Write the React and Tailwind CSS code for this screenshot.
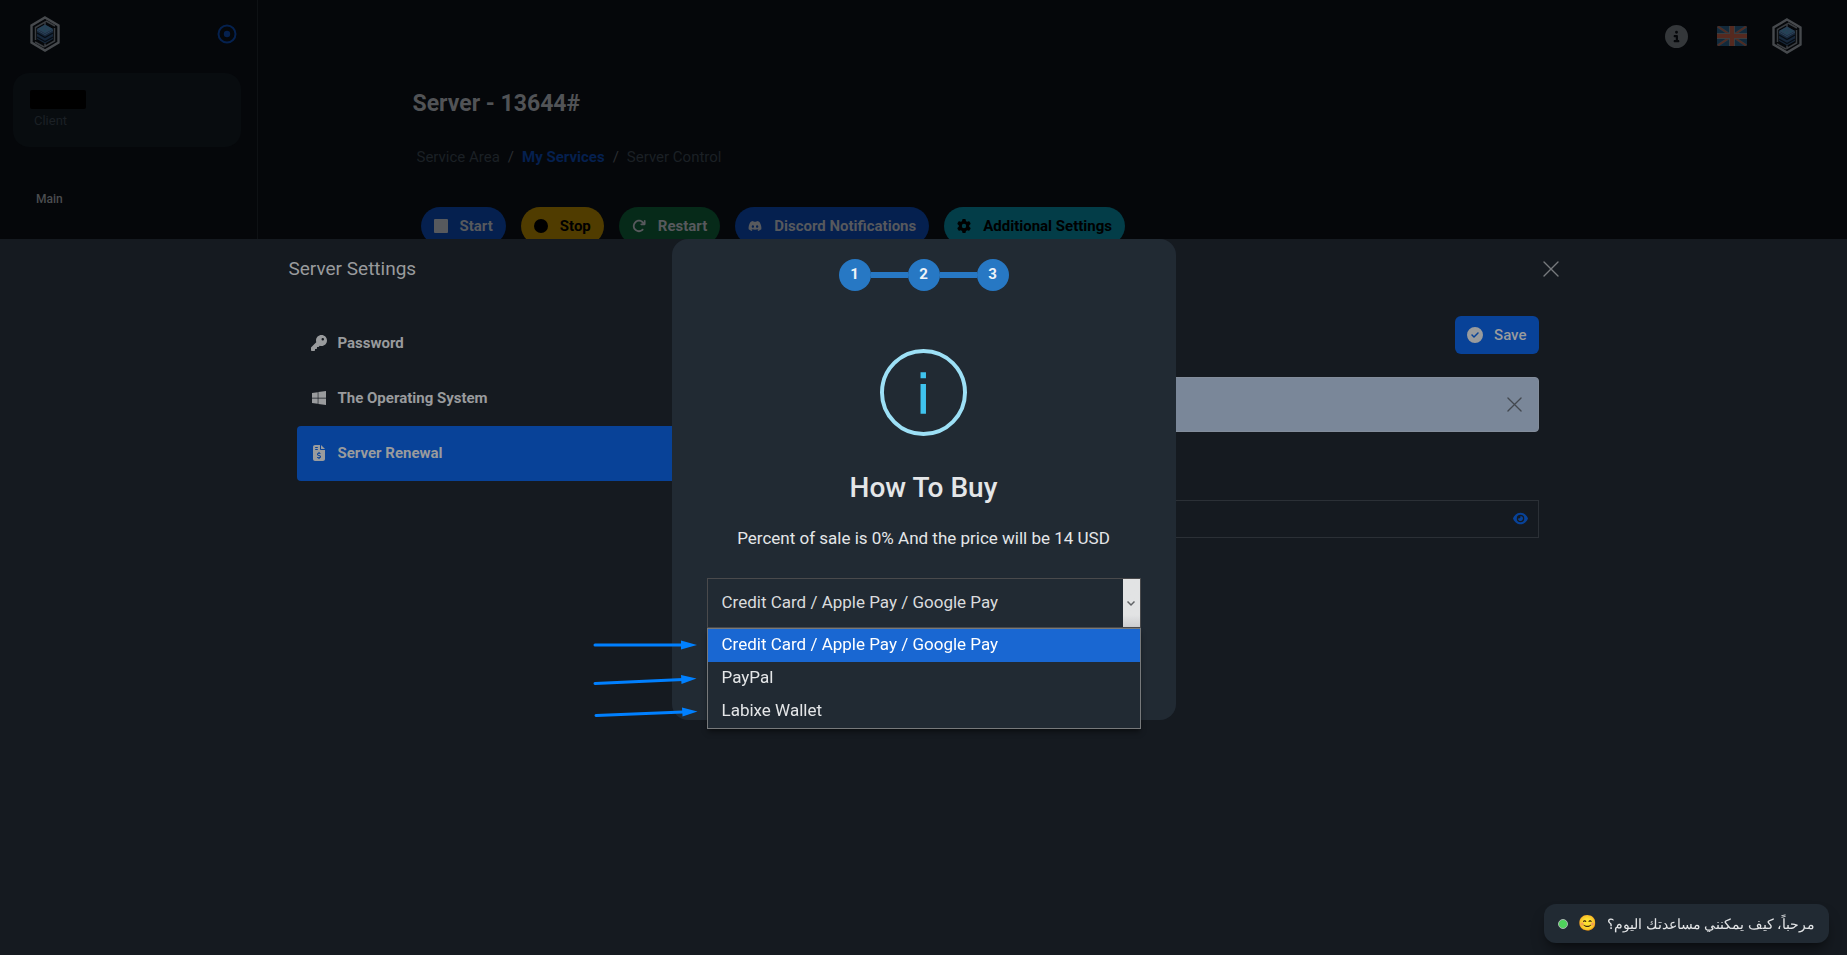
import { useState } from 'react';
import {
  FaArrowRotateRight,
  FaCircle,
  FaCircleCheck,
  FaCircleInfo,
  FaDiscord,
  FaEye,
  FaFileInvoiceDollar,
  FaGear,
  FaKey,
  FaWindows,
} from 'react-icons/fa6';

function SquareIcon({ className }) {
  return (
    <svg className={className} viewBox="0 0 14 14" fill="currentColor">
      <rect width="14" height="14" rx="1" />
    </svg>
  );
}

const actions = [
  { label: 'Start', icon: SquareIcon, className: 'bg-[#05204f] text-[#57595d]' },
  { label: 'Stop', icon: FaCircle, className: 'bg-[#503c00] text-black' },
  { label: 'Restart', icon: FaArrowRotateRight, className: 'bg-[#062a19] text-[#57595d]' },
  { label: 'Discord Notifications', icon: FaDiscord, className: 'bg-[#05204f] text-[#57595d]' },
  { label: 'Additional Settings', icon: FaGear, className: 'bg-[#033d48] text-black' },
];

const tabs = [
  { label: 'Password', icon: FaKey },
  { label: 'The Operating System', icon: FaWindows },
  { label: 'Server Renewal', icon: FaFileInvoiceDollar },
];

const methods = ['Credit Card / Apple Pay / Google Pay', 'PayPal', 'Labixe Wallet'];

function Logo() {
  return (
    <svg className="h-9 w-[30px]" viewBox="0 0 30 36" fill="none" aria-hidden="true">
      <path d="M15 1.500 28.500 9.500v17L15 34.500 1.500 26.500v-17z" stroke="#46494d" strokeWidth="2.400" />
      <path d="M5.500 24V11.500L15 6v3M24.500 12v13L15 30.500v-3M5 26l9 5M16 5l9 5" stroke="#3a3d41" strokeWidth="1.500" />
      <path d="m15 8.500 8 4.500v10l-8 4.500-8-4.500V13z" fill="#17273a" />
      <path d="m15 8.500 8 4.500-8 4.500L7 13z" fill="#284056" />
      <path d="m7 17 8 4.500 8-4.500M7 21l8 4.500 8-4.500" stroke="#070d14" strokeWidth="1.400" />
      <path d="m7 14 8 4.500 8-4.500" stroke="#2c4157" />
      <path d="m11 13 1.500-.8M15 10.500l1.500.8M14 15l1.500-.8M18 13.500l1.500-.5" stroke="#1a4a55" />
    </svg>
  );
}

function Flag() {
  return (
    <svg className="h-5 w-[30px]" viewBox="0 0 30 20" role="img" aria-label="English">
      <clipPath id="flag-clip">
        <rect width="30" height="20" rx="2" />
      </clipPath>
      <g clipPath="url(#flag-clip)">
        <path d="M0 0h30v20H0z" fill="#12293b" />
        <path d="m0 0 30 20M30 0 0 20" stroke="#33383c" strokeWidth="2.600" />
        <path d="m0 0 30 20M30 0 0 20" stroke="#55291f" strokeWidth="1.400" />
        <path d="M15 0v20M0 10h30" stroke="#3a3d40" strokeWidth="6" />
        <path d="M15 0v20M0 10h30" stroke="#55291f" strokeWidth="4" />
      </g>
    </svg>
  );
}

function CloseIcon({ className }) {
  return (
    <svg className={className} viewBox="0 0 16 16" fill="none" stroke="currentColor" strokeWidth="1.400" strokeLinecap="round">
      <path d="m1 1 14 14M15 1 1 15" />
    </svg>
  );
}

function Sidebar() {
  return (
    <aside className="w-[258px] shrink-0 border-r border-[#0e1114]">
      <div className="flex items-center justify-between pt-4 pr-5 pl-[30px]">
        <a href="#home" aria-label="Home">
          <Logo />
        </a>
        <button type="button" aria-label="Pin menu">
          <svg className="h-5 w-5" viewBox="0 0 20 20">
            <circle cx="10" cy="10" r="8.500" fill="none" stroke="#05214f" strokeWidth="2" />
            <circle cx="10" cy="10" r="3.200" fill="#05214f" />
          </svg>
        </button>
      </div>
      <div className="mx-[13px] mt-[21px] mr-4 h-[74px] rounded-2xl bg-[#080c0f] px-[17px] pt-[17px]">
        <div className="h-[19px] w-14 rounded-xs bg-black" />
        <p className="pl-1 text-[13px] leading-6 text-[#1b2025]">Client</p>
      </div>
      <p className="mt-10 pl-9 text-xs leading-6 font-medium text-[#4b4d50]">Main</p>
    </aside>
  );
}

function PageHeader() {
  return (
    <header className="flex h-[72px] items-center justify-end pr-[45px]">
      <button type="button" aria-label="Information" className="mr-[29px] text-[#34373a]">
        <FaCircleInfo size={23} />
      </button>
      <button type="button" className="mr-[25px]">
        <Flag />
      </button>
      <a href="#account" aria-label="Account">
        <Logo />
      </a>
    </header>
  );
}

function ServerPage() {
  return (
    <div className="mx-auto max-w-[1280px]">
      <h1 className="pt-4 text-[23px] leading-8 font-bold text-[#515356]">Server - 13644#</h1>
      <nav className="mt-[27px] flex gap-2 pl-1 text-[15px] leading-5 text-[#1b2025]">
        <span>Service Area</span>
        <span className="text-[#2b2e31]">/</span>
        <a href="#services" className="font-bold text-[#05204f]">
          My Services
        </a>
        <span className="text-[#2b2e31]">/</span>
        <span>Server Control</span>
      </nav>
      <div className="mt-10 flex gap-[15px] pl-2">
        {actions.map(({ label, icon: Icon, className }) => (
          <button
            key={label}
            type="button"
            className={`flex h-[38px] items-center gap-3 rounded-full px-[13px] text-[15px] font-bold ${className}`}
          >
            <Icon className="h-[14px] w-auto" />
            {label}
          </button>
        ))}
      </div>
    </div>
  );
}

function SettingsPanel() {
  return (
    <section className="fixed inset-x-0 bottom-0 h-3/4 bg-[#151a20] text-[#999b9d]">
      <div className="mx-auto max-w-[1320px]">
        <div className="flex h-[60px] items-center justify-between px-[25px]">
          <h2 className="text-[19px]">Server Settings</h2>
          <button type="button" aria-label="Close settings" className="text-[#777a7d]">
            <CloseIcon className="h-4 w-4" />
          </button>
        </div>
        <div className="flex gap-6 pt-[17px] pr-[45px] pl-[33px]">
          <nav className="w-1/3">
            {tabs.map(({ label, icon: Icon }) => (
              <button
                key={label}
                type="button"
                className={`flex h-[55px] w-full items-center gap-[11px] rounded px-[14px] text-[15px] font-bold ${
                  label === 'Server Renewal' ? 'bg-[#084298]' : ''
                }`}
              >
                <Icon className="h-4 w-auto" />
                {label}
              </button>
            ))}
          </nav>
          <div className="flex-1">
            <button
              type="button"
              className="ml-auto flex h-[38px] items-center gap-[11px] rounded-md bg-[#084298] px-3 text-[15px] font-medium"
            >
              <FaCircleCheck size={16} />
              Save
            </button>
            <div className="mt-[23px] flex h-[55px] items-center justify-end rounded border border-[#838d9b] bg-[#7a8799] pr-4">
              <button type="button" aria-label="Dismiss" className="text-[#43484f]">
                <CloseIcon className="h-[15px] w-[15px]" />
              </button>
            </div>
            <div className="mt-[68px] flex h-[38px] items-center border border-[#2b3036] pr-[10px]">
              <input
                type="password"
                aria-label="Coupon"
                className="h-full min-w-0 flex-1 bg-transparent px-3 outline-none"
              />
              <button type="button" aria-label="Show" className="text-[#084298]">
                <FaEye size={15} />
              </button>
            </div>
          </div>
        </div>
      </div>
    </section>
  );
}

function Steps() {
  return (
    <ol className="flex items-center justify-center text-[15px] font-bold text-[#eef3f8]">
      {[1, 2, 3].map((step) => (
        <li key={step} className="flex items-center">
          {step > 1 && <span className="h-[6px] w-[37px] bg-[#2778c4]" />}
          <span className="flex h-8 w-8 items-center justify-center rounded-full bg-[#2778c4]">{step}</span>
        </li>
      ))}
    </ol>
  );
}

function Pointers() {
  return (
    <svg className="absolute top-[58px] -left-[117px] h-[88px] w-[110px]" viewBox="0 0 110 88" aria-hidden="true">
      <g stroke="#0080ff" strokeWidth="3" strokeLinecap="round">
        <path d="M5 9h88" />
        <path d="m5 47.500 88-4" />
        <path d="m6 79.500 87-3.500" />
      </g>
      <g fill="#0080ff">
        <path d="M91 4.500v9l16-4.500z" />
        <path d="m91 39 .5 9 15-5.500z" />
        <path d="m92 71.500.5 9 15-5z" />
      </g>
    </svg>
  );
}

function PaymentSelect() {
  const [method, setMethod] = useState(methods[0]);

  return (
    <div className="relative">
      <div className="flex h-[50px] border border-[#4a4a4c]">
        <select
          aria-label="Payment method"
          value={method}
          onChange={(e) => setMethod(e.target.value)}
          className="min-w-0 flex-1 appearance-none bg-[#212a33] px-[14px] text-[17px] text-[#dadcde] outline-none"
        >
          {methods.map((name) => (
            <option key={name}>{name}</option>
          ))}
        </select>
        <span className="flex w-[17px] items-center justify-center bg-linear-to-b from-[#e2e3e4] from-75% to-[#cccdd0]">
          <svg className="h-2 w-2" viewBox="0 0 8 8" fill="none" stroke="#606366" strokeWidth="1.500">
            <path d="m.5 2.500 3.500 3.500 3.500-3.500" />
          </svg>
        </span>
      </div>
      <ul
        role="listbox"
        className="absolute inset-x-0 top-full border border-[#77797b] bg-[#212a33] text-[17px] text-[#e4e6e8] shadow-md shadow-black/40"
      >
        {methods.map((name) => (
          <li
            key={name}
            role="option"
            aria-selected={name === method}
            onClick={() => setMethod(name)}
            className={`flex h-[33px] items-center px-[14px] ${name === method ? 'bg-[#1967d2] text-white' : ''}`}
          >
            {name}
          </li>
        ))}
      </ul>
      <Pointers />
    </div>
  );
}

function HowToBuy() {
  return (
    <div className="fixed inset-0 flex items-center justify-center pt-[3px]">
      <div
        role="dialog"
        aria-labelledby="buy-title"
        className="w-[504px] rounded-2xl bg-[#212a33] px-[35px] pt-5 pb-[92px] text-[#e4e6e8]"
      >
        <Steps />
        <svg className="mx-auto mt-[58px] h-[87px] w-[87px]" viewBox="0 0 88 88" aria-hidden="true">
          <circle cx="44" cy="44" r="42" fill="none" stroke="#9de0f6" strokeWidth="4" />
          <path d="M41 23.500h5.500v6H41zM41 35.500h5.500v30H41z" fill="#3fc3ee" />
        </svg>
        <h2 id="buy-title" className="mt-8 text-center text-[28px] leading-10 font-medium">
          How To Buy
        </h2>
        <p className="mt-4 mb-[26px] text-center text-[17px] leading-7">
          Percent of sale is 0% And the price will be 14 USD
        </p>
        <PaymentSelect />
      </div>
    </div>
  );
}

function ChatBubble() {
  return (
    <button
      type="button"
      dir="rtl"
      className="fixed right-[18px] bottom-3 flex h-[39px] items-center gap-[6px] rounded-xl bg-[#212a33] px-[14px] text-sm text-[#e4e6e8] shadow-lg shadow-black/40"
    >
      <span>مرحباً، كيف يمكنني مساعدتك اليوم؟</span>
      <span className="px-1 text-[15px]">😊</span>
      <span className="h-[10px] w-[10px] rounded-full border border-[#a9b5b0] bg-[#4fd25c]" />
    </button>
  );
}

function App() {
  return (
    <div className="min-h-screen bg-[#05070a] font-['Roboto','Noto_Sans',sans-serif]">
      <div className="flex min-h-screen">
        <Sidebar />
        <main className="flex-1">
          <PageHeader />
          <ServerPage />
        </main>
      </div>
      <SettingsPanel />
      <HowToBuy />
      <ChatBubble />
    </div>
  );
}

export default App;
